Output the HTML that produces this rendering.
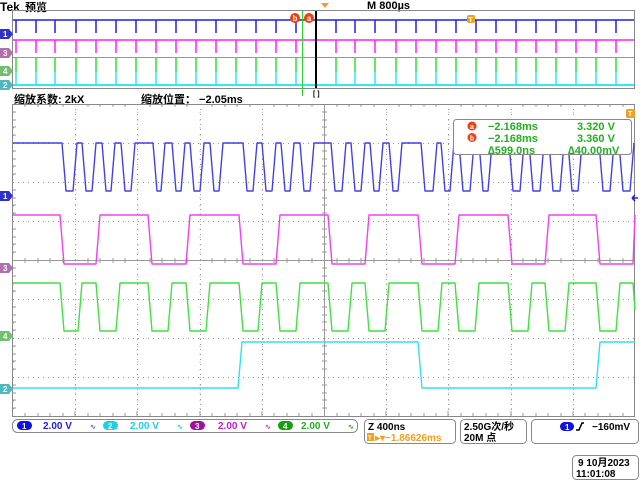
<!DOCTYPE html>
<html><head><meta charset="utf-8"><style>
html,body{margin:0;padding:0;background:#fff;width:640px;height:480px;overflow:hidden}
svg{display:block}
text{font-family:"Liberation Sans","Noto Sans CJK SC",sans-serif;font-weight:bold}
</style></head><body>
<svg width="640" height="480" viewBox="0 0 640 480" xmlns="http://www.w3.org/2000/svg">
<defs>
<pattern id="dotv" width="62.2" height="7.8" patternUnits="userSpaceOnUse" x="13" y="104"><rect x="0" y="0" width="1" height="1" fill="#999"/></pattern>
</defs>
<text x="0" y="11" font-size="12" fill="#000">Tek</text>
<text x="25" y="11" font-size="11" fill="#000" font-weight="normal">预览</text>
<text x="367" y="9" font-size="11" fill="#000">M 800µs</text>
<polygon points="321,3 329,3 325,8" fill="#f0a020"/>
<rect x="12.5" y="10.5" width="622" height="78" fill="none" stroke="#888"/>
<g stroke-width="1.5" fill="none">
<path d="M13 20H634" stroke="#2020e0"/>
<path d="M16 20V33M36 20V33M55 20V33M76 20V33M96 20V33M116 20V33M136 20V33M156 20V33M176 20V33M196 20V33M216 20V33M236 20V33M256 20V33M276 20V33M296 20V33M336 20V33M355 20V33M375 20V33M396 20V33M416 20V33M436 20V33M456 20V33M476 20V33M496 20V33M516 20V33M536 20V33M556 20V33M576 20V33M596 20V33M616 20V33" stroke="#2020e0"/>
<path d="M13 40H634" stroke="#ff20ff"/>
<path d="M16 40V53M36 40V53M55 40V53M76 40V53M96 40V53M116 40V53M136 40V53M156 40V53M176 40V53M196 40V53M216 40V53M236 40V53M256 40V53M276 40V53M296 40V53M336 40V53M355 40V53M375 40V53M396 40V53M416 40V53M436 40V53M456 40V53M476 40V53M496 40V53M516 40V53M536 40V53M556 40V53M576 40V53M596 40V53M616 40V53" stroke="#ff20ff"/>
<path d="M13 57.5H634" stroke="#30e030" stroke-width="1"/>
<path d="M16 57V72M36 57V72M55 57V72M76 57V72M96 57V72M116 57V72M136 57V72M156 57V72M176 57V72M196 57V72M216 57V72M236 57V72M256 57V72M276 57V72M296 57V72M336 57V72M355 57V72M375 57V72M396 57V72M416 57V72M436 57V72M456 57V72M476 57V72M496 57V72M516 57V72M536 57V72M556 57V72M576 57V72M596 57V72M616 57V72" stroke="#30e030"/>
<path d="M16 72V85M36 72V85M55 72V85M76 72V85M96 72V85M116 72V85M136 72V85M156 72V85M176 72V85M196 72V85M216 72V85M236 72V85M256 72V85M276 72V85M296 72V85M336 72V85M355 72V85M375 72V85M396 72V85M416 72V85M436 72V85M456 72V85M476 72V85M496 72V85M516 72V85M536 72V85M556 72V85M576 72V85M596 72V85M616 72V85" stroke="#30e8f0"/>
<path d="M13 85H634" stroke="#30e8f0" stroke-width="2"/>
</g>
<line x1="302.5" y1="11" x2="302.5" y2="96" stroke="#30d030" stroke-width="1"/>
<line x1="316" y1="11" x2="316" y2="88" stroke="#000" stroke-width="2"/>
<text x="313" y="96" font-size="7" fill="#000" font-weight="normal">[ ]</text>
<circle cx="295" cy="18" r="5" fill="#f04010"/><text x="295" y="21" font-size="8" fill="#fff" text-anchor="middle">b</text>
<circle cx="309" cy="18" r="5" fill="#f04010"/><text x="309" y="21" font-size="8" fill="#fff" text-anchor="middle">a</text>
<rect x="467" y="15" width="8" height="8" rx="2" fill="#f0a020"/><text x="468.5" y="22" font-size="7" fill="#fff">T</text>
<g font-size="8" fill="#fff">
<path d="M0 29H9L13 34L9 39H0Z" fill="#3030d0"/><text x="3" y="37">1</text>
<path d="M0 48H9L13 53L9 58H0Z" fill="#b070b0"/><text x="3" y="56">3</text>
<path d="M0 66H9L13 71L9 76H0Z" fill="#70c070"/><text x="3" y="74">4</text>
<path d="M0 80H9L13 85L9 90H0Z" fill="#50b8c0"/><text x="3" y="88">2</text>
</g>
<text x="14" y="103" font-size="11" fill="#000" font-weight="normal">缩放系数: 2kX</text>
<text x="141" y="103" font-size="11" fill="#000" font-weight="normal">缩放位置： −2.05ms</text>
<rect x="13" y="104" width="622" height="312" fill="url(#dotv)"/>
<g stroke="#999" stroke-width="1" stroke-dasharray="1 4">
<path d="M75.5 104V416M137.5 104V416M200.5 104V416M262.5 104V416M386.5 104V416M448.5 104V416M511.5 104V416M573.5 104V416"/>
<path d="M13 143.5H635M13 182.5H635M13 221.5H635M13 299.5H635M13 338.5H635M13 377.5H635"/>
</g>
<line x1="13" y1="260.5" x2="635" y2="260.5" stroke="#999"/>
<line x1="324.5" y1="104" x2="324.5" y2="416" stroke="#999"/>
<g stroke="#999">
<path d="M25 258V263M38 258V263M50 258V263M63 258V263M88 258V263M100 258V263M113 258V263M125 258V263M150 258V263M162 258V263M175 258V263M187 258V263M212 258V263M225 258V263M237 258V263M250 258V263M274 258V263M287 258V263M299 258V263M312 258V263M337 258V263M349 258V263M361 258V263M374 258V263M399 258V263M411 258V263M424 258V263M436 258V263M461 258V263M473 258V263M486 258V263M498 258V263M523 258V263M536 258V263M548 258V263M561 258V263M585 258V263M598 258V263M610 258V263M623 258V263"/>
<path d="M322 112H327M322 120H327M322 127H327M322 135H327M322 151H327M322 159H327M322 166H327M322 174H327M322 190H327M322 198H327M322 205H327M322 213H327M322 229H327M322 237H327M322 244H327M322 252H327M322 268H327M322 276H327M322 283H327M322 291H327M322 307H327M322 315H327M322 322H327M322 330H327M322 346H327M322 354H327M322 361H327M322 369H327M322 385H327M322 393H327M322 400H327M322 408H327"/>
<path d="M13 112H16M13 120H16M13 127H16M13 135H16M13 151H16M13 159H16M13 166H16M13 174H16M13 190H16M13 198H16M13 205H16M13 213H16M13 229H16M13 237H16M13 244H16M13 252H16M13 268H16M13 276H16M13 283H16M13 291H16M13 307H16M13 315H16M13 322H16M13 330H16M13 346H16M13 354H16M13 361H16M13 369H16M13 385H16M13 393H16M13 400H16M13 408H16"/>
<path d="M25 413V416M38 413V416M50 413V416M63 413V416M75 411V416M88 413V416M100 413V416M113 413V416M125 413V416M137 411V416M150 413V416M162 413V416M175 413V416M187 413V416M200 411V416M212 413V416M225 413V416M237 413V416M250 413V416M262 411V416M274 413V416M287 413V416M299 413V416M312 413V416M337 413V416M349 413V416M361 413V416M374 413V416M386 411V416M399 413V416M411 413V416M424 413V416M436 413V416M448 411V416M461 413V416M473 413V416M486 413V416M498 413V416M511 411V416M523 413V416M536 413V416M548 413V416M561 413V416M573 411V416M585 413V416M598 413V416M610 413V416M623 413V416"/>
<path d="M25 104V107M38 104V107M50 104V107M63 104V107M88 104V107M100 104V107M113 104V107M125 104V107M150 104V107M162 104V107M175 104V107M187 104V107M212 104V107M225 104V107M237 104V107M250 104V107M274 104V107M287 104V107M299 104V107M312 104V107M337 104V107M349 104V107M361 104V107M374 104V107M399 104V107M411 104V107M424 104V107M436 104V107M461 104V107M473 104V107M486 104V107M498 104V107M523 104V107M536 104V107M548 104V107M561 104V107M585 104V107M598 104V107M610 104V107M623 104V107"/>
</g>
<rect x="12.5" y="104.5" width="622" height="312" fill="none" stroke="#888"/>
<g fill="none" stroke-width="1.4" stroke-linejoin="round">
<path stroke="#4040e8" d="M13 143 H62 L66 191 H73 L77 143 H82 L86 191 H92 L96 143 H102 L106 191 H111 L115 143 H121 L125 191 H131 L135 143 H153 L157 191 H161 L165 143 H172 L176 191 H181 L185 143 H190 L194 191 H200 L204 143 H210 L214 191 H219 L223 143 H243 L247 191 H253 L257 143 H262 L266 191 H272 L276 143 H281 L285 191 H290 L294 143 H300 L304 191 H310 L314 143 H331 L335 191 H342 L346 143 H351 L355 191 H361 L365 143 H370 L374 191 H379 L383 143 H389 L393 191 H398 L402 143 H421 L425 191 H433 L437 143 H441 L445 191 H450 L454 143 H459 L463 191 H470 L474 143 H479 L483 191 H488 L492 143 H509 L513 191 H520 L524 143 H529 L533 191 H540 L544 143 H549 L553 191 H560 L564 143 H568 L572 191 H578 L582 143 H599 L603 191 H610 L614 143 H619 L623 191 H630 L634 143"/>
<path stroke="#f040f0" d="M13 215 H60 L64 264 H96 L100 215 H148 L152 264 H186 L190 215 H239 L243 264 H276 L280 215 H328 L332 264 H365 L369 215 H418 L422 264 H455 L459 215 H508 L512 264 H545 L549 215 H596 L600 264 H633 L635 215"/>
<path stroke="#40e040" d="M13 283 H60 L64 331 H78 L82 283 H96 L100 331 H116 L120 283 H148 L152 331 H168 L172 283 H186 L190 331 H206 L210 283 H239 L243 331 H258 L262 283 H276 L280 331 H296 L300 283 H328 L332 331 H348 L352 283 H365 L369 331 H385 L389 283 H418 L422 331 H438 L442 283 H455 L459 331 H475 L479 283 H508 L512 331 H528 L532 283 H545 L549 331 H565 L569 283 H596 L600 331 H616 L620 283 H633 L635 310"/>
<path stroke="#30e0f0" d="M13 388 H238 L242 342 H418 L422 388 H596 L600 342 H635"/>
</g>
<g font-size="8" fill="#fff">
<path d="M0 191H9L13 196L9 201H0Z" fill="#3030d0"/><text x="3" y="199">1</text>
<path d="M0 263H9L13 268L9 273H0Z" fill="#b070b0"/><text x="3" y="271">3</text>
<path d="M0 331H9L13 336L9 341H0Z" fill="#70c070"/><text x="3" y="339">4</text>
<path d="M0 384H9L13 389L9 394H0Z" fill="#50b8c0"/><text x="3" y="392">2</text>
</g>
<rect x="626" y="109" width="9" height="9" rx="2" fill="#f0a020"/><text x="628" y="116" font-size="7" fill="#fff">T</text>
<path d="M632 198H638M632 198L635 195M632 198L635 201" stroke="#2020e0" stroke-width="1.5"/>
<rect x="453.5" y="119.5" width="178" height="35" rx="3" fill="#fff" stroke="#888"/>
<circle cx="472" cy="126" r="4.5" fill="#f04010"/><text x="472" y="129" font-size="7" fill="#fff" text-anchor="middle">a</text>
<circle cx="472" cy="137.5" r="4.5" fill="#f04010"/><text x="472" y="140.5" font-size="7" fill="#fff" text-anchor="middle">b</text>
<g font-size="11" fill="#20b020">
<text x="488" y="130">−2.168ms</text><text x="577" y="130">3.320 V</text>
<text x="488" y="142">−2.168ms</text><text x="577" y="142">3.360 V</text>
<text x="488" y="154">∆599.0ns</text><text x="568" y="154">∆40.00mV</text>
</g>
<rect x="12.5" y="419.5" width="345" height="13" rx="5" fill="#fff" stroke="#888"/>
<g font-size="10" font-weight="normal">
<rect x="17" y="421" width="15" height="9" rx="4.5" fill="#1010e0"/><text x="22" y="429" fill="#fff" font-size="8">1</text>
<text x="43" y="429" fill="#2020e0">2.00 V</text><text x="90" y="429" fill="#6060e0" font-size="7">∿</text>
<rect x="103" y="421" width="15" height="9" rx="4.5" fill="#20d0e0"/><text x="108" y="429" fill="#fff" font-size="8">2</text>
<text x="130" y="429" fill="#20d0e0">2.00 V</text><text x="177" y="429" fill="#20d0e0" font-size="7">∿</text>
<rect x="190" y="421" width="15" height="9" rx="4.5" fill="#a010a0"/><text x="195" y="429" fill="#fff" font-size="8">3</text>
<text x="218" y="429" fill="#c020c0">2.00 V</text><text x="265" y="429" fill="#c040c0" font-size="7">∿</text>
<rect x="278" y="421" width="15" height="9" rx="4.5" fill="#10a010"/><text x="283" y="429" fill="#fff" font-size="8">4</text>
<text x="301" y="429" fill="#20b020">2.00 V</text><text x="348" y="429" fill="#20b020" font-size="7">∿</text>
</g>
<rect x="364.5" y="419.5" width="91" height="24" rx="4" fill="#fff" stroke="#888"/>
<text x="368" y="430" font-size="10" fill="#000" font-weight="normal">Z 400ns</text>
<rect x="367" y="433" width="7" height="8" fill="#f0a020"/><text x="368" y="440" font-size="6" fill="#fff">T</text>
<text x="375" y="441" font-size="10" fill="#f0a020" font-weight="normal">▸▾−1.86626ms</text>
<rect x="460.5" y="419.5" width="66" height="24" rx="4" fill="#fff" stroke="#888"/>
<text x="464" y="430" font-size="10" fill="#000" font-weight="normal">2.50G次/秒</text>
<text x="464" y="441" font-size="10" fill="#000" font-weight="normal">20M 点</text>
<rect x="531.5" y="419.5" width="107" height="24" rx="4" fill="#fff" stroke="#888"/>
<rect x="560" y="422" width="14" height="9" rx="4.5" fill="#1010e0"/><text x="565" y="430" fill="#fff" font-size="8">1</text>
<path d="M576 430H579L582 423H584" stroke="#000" stroke-width="1.5" fill="none"/>
<text x="592" y="430" font-size="10" fill="#000" font-weight="normal">−160mV</text>
<rect x="572.5" y="455.5" width="66" height="24" rx="4" fill="#fff" stroke="#888"/>
<text x="578" y="466" font-size="10" fill="#000" font-weight="normal">9 10月2023</text>
<text x="576" y="477" font-size="10" fill="#000" font-weight="normal">11:01:08</text>
</svg>
</body></html>
